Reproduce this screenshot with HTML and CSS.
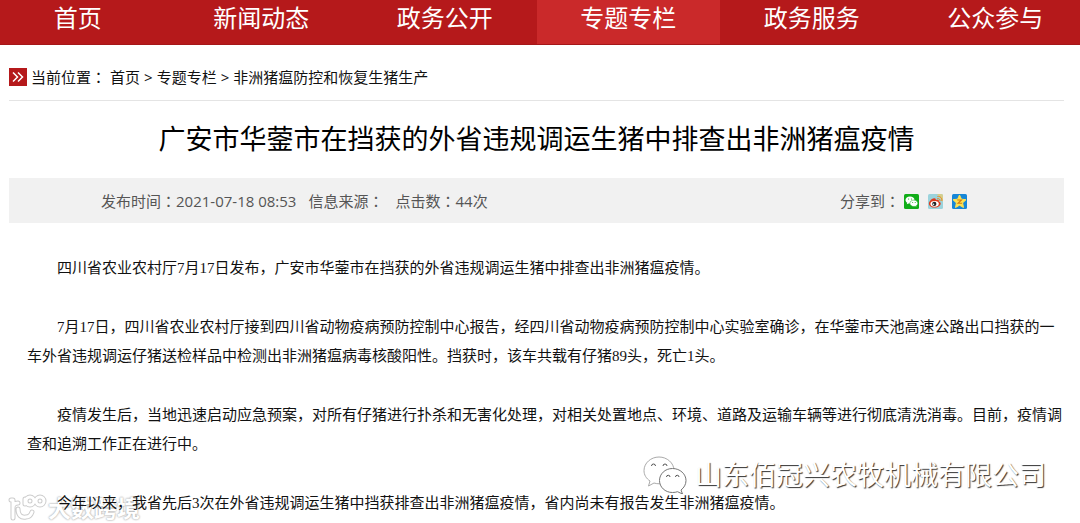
FILE: index.html
```html
<!DOCTYPE html>
<html lang="zh-CN">
<head>
<meta charset="utf-8">
<meta name="viewport" content="width=device-width, initial-scale=1">
<title>广安市华蓥市在挡获的外省违规调运生猪中排查出非洲猪瘟疫情</title>
<link rel="stylesheet" href="styles.css">
</head>
<body>
<nav class="nav">
  <a href="#">首页</a>
  <a href="#">新闻动态</a>
  <a href="#">政务公开</a>
  <a href="#" class="active">专题专栏</a>
  <a href="#">政务服务</a>
  <a href="#">公众参与</a>
</nav>
<main class="page">
  <div class="crumbs">
    <svg class="crumb-icon" viewBox="0 0 18 18" aria-hidden="true">
      <rect width="18" height="18" fill="#b5191b"/>
      <path d="M4 4.500 8.500 9 4 13.500M9 4.500 13.500 9 9 13.500" fill="none" stroke="#fff" stroke-width="1.500"/>
    </svg>
    <span>当前位置<span class="colon" lang="zh-TW">：</span></span>
    <a href="#">首页</a><span>&gt;</span><a href="#">专题专栏</a><span>&gt;</span><a href="#">非洲猪瘟防控和恢复生猪生产</a>
  </div>
  <h1 class="title">广安市华蓥市在挡获的外省违规调运生猪中排查出非洲猪瘟疫情</h1>
  <div class="meta">
    <div class="facts">
      <span>发布时间<span class="colon" lang="zh-TW">：</span>2021-07-18 08:53</span>
      <span>信息来源<span class="colon" lang="zh-TW">：</span></span>
      <span>点击数<span class="colon" lang="zh-TW">：</span>44次</span>
    </div>
    <div class="share">
      <span>分享到<span class="colon" lang="zh-TW">：</span></span>
      <div class="share-links">
        <a href="#" aria-label="微信">
          <svg viewBox="0 0 15 15">
            <rect width="15" height="15" rx="1.500" fill="#10ad18"/>
            <path d="M6 2.500c-2.600 0-4.500 1.600-4.500 3.500 0 1.200.7 2.200 1.700 2.800L2.800 10.300l1.700-.9c.5.1 1 .2 1.500.2 2.500 0 4.500-1.600 4.500-3.600S8.500 2.500 6 2.500Z" fill="#fff"/>
            <path d="M9.900 6.100c-2.300 0-4 1.400-4 3.200s1.700 3.200 4 3.200c.5 0 .9-.1 1.300-.2l1.500.8-.4-1.400c.9-.6 1.500-1.400 1.500-2.400 0-1.800-1.700-3.200-3.900-3.200Z" fill="#fff" stroke="#10ad18" stroke-width=".5"/>
            <g fill="#10ad18"><circle cx="4.600" cy="5" r=".6"/><circle cx="7.500" cy="5" r=".6"/><circle cx="8.700" cy="8.500" r=".5"/><circle cx="11.200" cy="8.500" r=".5"/></g>
          </svg>
        </a>
        <a href="#" aria-label="微博">
          <svg viewBox="0 0 15 15">
            <rect width="15" height="15" rx="1.500" fill="#9bd3dc"/>
            <path d="M9 0h4.500A1.500 1.500 0 0 1 15 1.500V8Z" fill="#d5cf8e"/>
            <path d="M6.300 4.300c-1.600-.5-5.400 2.800-5.400 5.400 0 2.400 2.900 3.900 5.800 3.900 3.700 0 6-2.100 6-4 0-1.300-1-1.900-1.900-2.100.5-1.600-.8-2.300-3-1.400.3-.9.100-1.500-1.500-1.800Z" fill="#df3b1c"/>
            <ellipse cx="6.600" cy="9.800" rx="4.200" ry="2.900" fill="#fff"/>
            <circle cx="6.300" cy="9.900" r="2.100" fill="#222"/><circle cx="5.600" cy="10.300" r=".7" fill="#fff"/>
            <path d="M9.200 4.600c1.700-.5 3.200.8 2.800 2.500M9.400 2.500c2.800-.6 5 1.700 4.400 4.500" fill="none" stroke="#e98a21" stroke-width="1"/>
          </svg>
        </a>
        <a href="#" aria-label="QQ空间">
          <svg viewBox="0 0 15 15">
            <rect width="15" height="15" rx="1.500" fill="#1787d8"/>
            <path d="m7.500 1 1.900 4.200 4.600.5-3.400 3.200.9 4.600-4-2.300-4 2.300.9-4.600L1 5.700l4.600-.5Z" fill="#ffe251" stroke="#ffe251" stroke-width="1"/>
            <path d="M5.300 6h4.200L6 9.300h4" fill="none" stroke="#d47a12" stroke-width="1.100"/>
          </svg>
        </a>
      </div>
    </div>
  </div>
  <article class="article">
    <p>四川省农业农村厅7月17日发布，广安市华蓥市在挡获的外省违规调运生猪中排查出非洲猪瘟疫情。</p>
    <p>7月17日，四川省农业农村厅接到四川省动物疫病预防控制中心报告，经四川省动物疫病预防控制中心实验室确诊，在华蓥市天池高速公路出口挡获的一车外省违规调运仔猪送检样品中检测出非洲猪瘟病毒核酸阳性。挡获时，该车共载有仔猪89头，死亡1头。</p>
    <p>疫情发生后，当地迅速启动应急预案，对所有仔猪进行扑杀和无害化处理，对相关处置地点、环境、道路及运输车辆等进行彻底清洗消毒。目前，疫情调查和追溯工作正在进行中。</p>
    <p>今年以来，我省先后3次在外省违规调运生猪中挡获排查出非洲猪瘟疫情，省内尚未有报告发生非洲猪瘟疫情。</p>
  </article>
  <div class="mark mark-site">
    <svg viewBox="0 0 40 28" aria-hidden="true">
      <g fill="none" stroke-linecap="round" stroke-linejoin="round">
        <g stroke="#ccc" stroke-width="5"><path d="M3 6h2v18M5 14c0-4 2-5 5-5M10 15c0 6 3 9 8 8 3 0 5-2 6-5M17 10V5"/><circle cx="22" cy="7" r="4"/><circle cx="32" cy="7" r="4"/></g>
        <g stroke="#fff" stroke-width="3"><path d="M3 6h2v18M5 14c0-4 2-5 5-5M10 15c0 6 3 9 8 8 3 0 5-2 6-5M17 10V5"/><circle cx="22" cy="7" r="4"/><circle cx="32" cy="7" r="4"/></g>
      </g>
    </svg>
    <span>大数跨境</span>
  </div>
  <div class="mark mark-account">
    <svg viewBox="0 0 44 38" aria-hidden="true">
      <g fill="#fff" stroke="#777" stroke-width="1">
        <path d="M16 1C8 1 1 7 1 14.500c0 4.500 2.300 8 6 10.500L5.500 30l5.500-3c2 .6 3.500.8 5.500.8C24 27.500 31 22 31 14.500S24 1 16 1Z" stroke="#aaa"/>
        <path d="M29.500 12.500c-7.500 0-13 5.500-13 12s5.500 12 13 12c2 0 3.500-.3 5-.8l5 2.300-1.500-4c3-2.300 5-5.500 5-9.500 0-6.500-6-12-13.500-12Z"/>
      </g>
      <path d="M8.500 10a2 2 0 0 1 4 0M20 10a2 2 0 0 1 4 0M23.500 21a1.500 1.500 0 0 1 3.500 0M32.500 21a1.500 1.500 0 0 1 3.500 0" fill="none" stroke="#555"/>
    </svg>
    <span>山东佰冠兴农牧机械有限公司</span>
  </div>
</main>
</body>
</html>
```

FILE: styles.css
```css
* {
  box-sizing: border-box;
}

body {
  margin: 0;
  background: #fff;
  color: #111;
  font: 15px/20px "Open Sans", "Noto Sans CJK SC", sans-serif;
  overflow-x: hidden;
}

a {
  color: inherit;
  text-decoration: none;
}

.colon {
  font-family: "Noto Sans CJK TC", sans-serif;
}

.nav {
  display: grid;
  grid-template-columns: repeat(6, 1fr);
  margin: 0 -7px 0 -14px;
  background: #b5191b;
}

.nav a {
  padding: 0 0 9px;
  border-bottom: 1px solid #a51719;
  color: #fff;
  font-size: 24px;
  line-height: 35px;
  text-align: center;
}

.nav .active {
  background: #ca292a;
}

.page {
  position: relative;
  padding: 0 16px 6px 9px;
}

.crumbs {
  display: flex;
  align-items: center;
  gap: 4px;
  padding: 22px 0 13px;
  border-bottom: 1px solid #e4e4e4;
}

.crumb-icon {
  width: 18px;
  height: 18px;
}

.title {
  margin: 0;
  padding: 18px 0 19px;
  color: #000;
  font-size: 27px;
  font-weight: 400;
  line-height: 40px;
  text-align: center;
}

.meta {
  display: flex;
  justify-content: space-between;
  align-items: center;
  padding: 13px 97px 12px 92px;
  background: #f1f1f1;
  color: #555;
}

.facts {
  display: flex;
  gap: 12px;
}

.share {
  display: flex;
  align-items: center;
  gap: 4px;
}

.share-links {
  display: flex;
  gap: 9px;
}

.share svg {
  display: block;
  width: 15px;
  height: 15px;
}

.article {
  position: relative;
  z-index: 1;
  padding: 31px 0 0 18px;
  font-family: "Liberation Serif", "Noto Sans CJK SC", serif;
  line-height: 29px;
}

.article p {
  margin: 0 0 30px;
  text-indent: 2em;
}

.article p:last-child {
  margin-bottom: 0;
}

.mark {
  position: absolute;
  display: flex;
  align-items: center;
  color: #fff;
  white-space: nowrap;
}

.mark-site {
  left: 8px;
  bottom: 1px;
  font-size: 23px;
  font-weight: 700;
  line-height: 30px;
  text-shadow: 0 0 2px #aaa, 0 0 2px #bbb;
}

.mark-site svg {
  width: 40px;
  height: 28px;
}

.mark-account {
  right: 34px;
  bottom: 30px;
  gap: 8px;
  font-size: 27px;
  line-height: 38px;
  text-shadow: 1px 1px 1px #333;
}

.mark-account svg {
  width: 44px;
  height: 38px;
}
```
